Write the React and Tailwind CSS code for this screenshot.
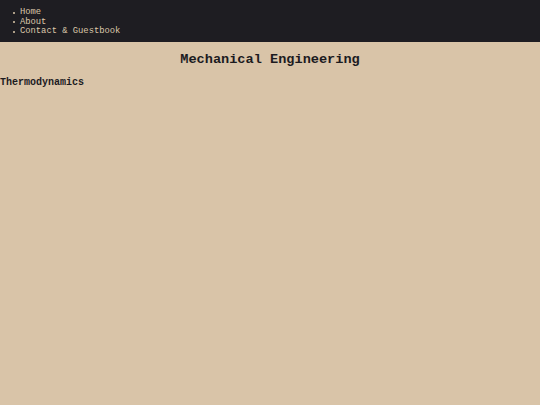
import React from 'react';

const links = ['Home', 'About', 'Contact & Guestbook'];

const App = () => {
  return (
    <div className="min-h-screen bg-[#d9c4a8] text-[#1c1b1f]" style={{ fontFamily: '"Liberation Mono", "Courier New", monospace' }}>
      {/* Nav */}
      <nav className="bg-[#1e1d22] pt-[8px] pb-[5px]">
        <ul className="pl-[13px] text-[8.8px] leading-[9.6px] text-[#dcc8aa]">
          {links.map(link => (
            <li key={link} className="flex items-center">
              <span className="mr-[5px] h-[2px] w-[2px] rounded-full bg-[#dcc8aa]" />
              <a href="#">{link}</a>
            </li>
          ))}
        </ul>
      </nav>

      <h1 className="mt-[10px] text-center text-[13.6px] leading-[16px] font-bold">
        Mechanical Engineering
      </h1>
      <h2 className="mt-[9px] text-[10px] leading-[12px] font-bold">
        Thermodynamics
      </h2>
    </div>
  );
};

export default App;
